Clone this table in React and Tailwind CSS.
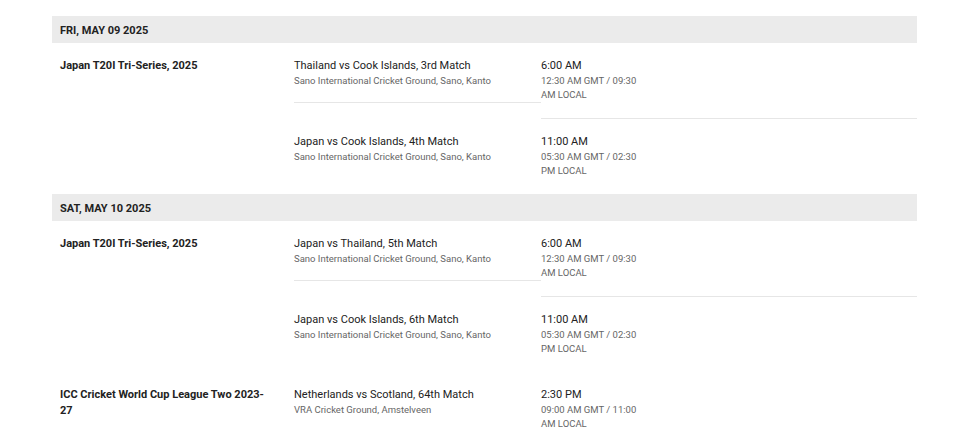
import React from 'react';

const days = [
    {
        date: 'FRI, MAY 09 2025',
        series: [
            {
                name: 'Japan T20I Tri-Series, 2025',
                matches: [
                    { title: 'Thailand vs Cook Islands, 3rd Match', venue: 'Sano International Cricket Ground, Sano, Kanto', time: '6:00 AM', gmt: '12:30 AM GMT / 09:30 AM LOCAL' },
                    { title: 'Japan vs Cook Islands, 4th Match', venue: 'Sano International Cricket Ground, Sano, Kanto', time: '11:00 AM', gmt: '05:30 AM GMT / 02:30 PM LOCAL' },
                ],
            },
        ],
    },
    {
        date: 'SAT, MAY 10 2025',
        series: [
            {
                name: 'Japan T20I Tri-Series, 2025',
                matches: [
                    { title: 'Japan vs Thailand, 5th Match', venue: 'Sano International Cricket Ground, Sano, Kanto', time: '6:00 AM', gmt: '12:30 AM GMT / 09:30 AM LOCAL' },
                    { title: 'Japan vs Cook Islands, 6th Match', venue: 'Sano International Cricket Ground, Sano, Kanto', time: '11:00 AM', gmt: '05:30 AM GMT / 02:30 PM LOCAL' },
                ],
            },
            {
                name: 'ICC Cricket World Cup League Two 2023-27',
                matches: [
                    { title: 'Netherlands vs Scotland, 64th Match', venue: 'VRA Cricket Ground, Amstelveen', time: '2:30 PM', gmt: '09:00 AM GMT / 11:00 AM LOCAL' },
                ],
            },
        ],
    },
];

function MatchRow({ match, last }) {
    const border = last ? '' : 'border-b border-[#e6e6e6]';
    return (
        <div className="flex items-start">
            {/* Match */}
            <div className={`w-[247px] pt-[15px] pb-[14px] ${border}`}>
                <p className="text-[11px] leading-[16px] text-[#222]">{match.title}</p>
                <p className="text-[9.5px] leading-[14px] text-[#666]">{match.venue}</p>
            </div>
            {/* Time */}
            <div className={`flex-1 pt-[15px] pb-[16px] ${border}`}>
                <p className="text-[11px] leading-[16px] text-[#222]">{match.time}</p>
                <p className="w-[100px] text-[9.5px] leading-[14px] text-[#666]">{match.gmt}</p>
            </div>
        </div>
    );
}

export default function App() {
    return (
        <div className="min-h-screen bg-white pt-4 font-[family-name:Roboto,sans-serif]">
            <div className="ml-[52px] w-[865px]">
                {days.map((day) => (
                    <div key={day.date}>
                        {/* Date header */}
                        <div className="h-[27px] bg-[#ebebeb] px-2 pt-[3px] flex items-center">
                            <h3 className="text-[11px] font-bold text-[#222]">{day.date}</h3>
                        </div>

                        {day.series.map((s) => (
                            <div key={s.name} className="flex items-start">
                                <div className="w-[242px] pl-2 pr-6 pt-[15px]">
                                    <p className="text-[11px] leading-[16px] font-bold text-[#222]">{s.name}</p>
                                </div>
                                <div className="flex-1">
                                    {s.matches.map((m, i) => (
                                        <MatchRow key={m.title} match={m} last={i === s.matches.length - 1} />
                                    ))}
                                </div>
                            </div>
                        ))}
                    </div>
                ))}
            </div>
        </div>
    );
}
